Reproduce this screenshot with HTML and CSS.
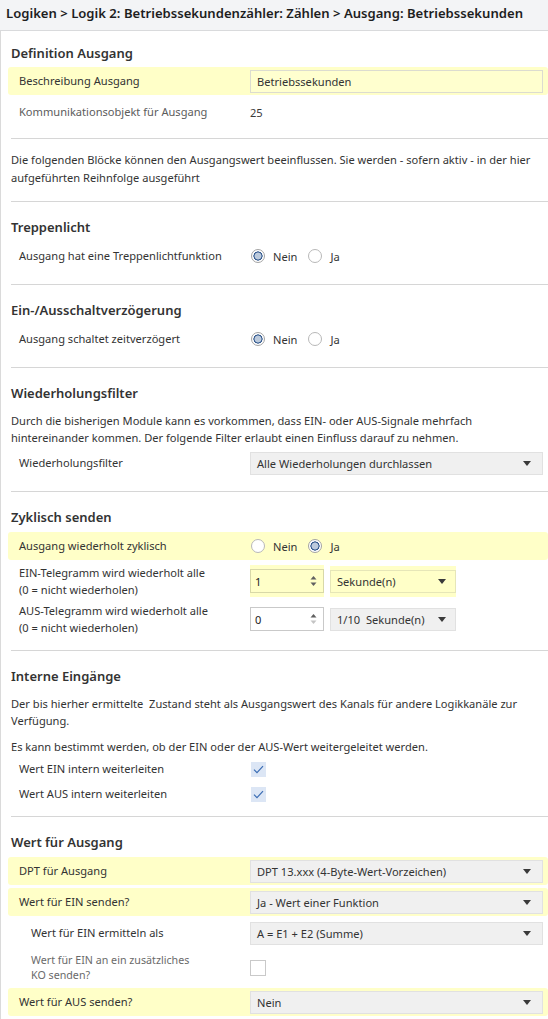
FILE: index.html
```html
<!DOCTYPE html>
<html lang="de">
<head>
<meta charset="utf-8">
<title>Ausgang: Betriebssekunden</title>
<link rel="stylesheet" href="styles.css">
</head>
<body>
<header class="crumb">Logiken &gt; Logik 2: Betriebssekundenzähler: Zählen &gt; Ausgang: Betriebssekunden</header>
<main class="panel">
  <section class="sec sec-first">
    <h2 class="title">Definition Ausgang</h2>
    <div class="row hl">
      <span class="lbl">Beschreibung Ausgang</span>
      <div class="textbox">Betriebssekunden</div>
    </div>
    <div class="row">
      <span class="lbl muted">Kommunikationsobjekt für Ausgang</span>
      <span class="value">25</span>
    </div>
  </section>

  <section class="sec sec-note">
    <p class="para para-wide">Die folgenden Blöcke können den Ausgangswert beeinflussen. Sie werden - sofern aktiv - in der hier<br>aufgeführten Reihnfolge ausgeführt</p>
  </section>

  <section class="sec">
    <h2 class="title">Treppenlicht</h2>
    <div class="row">
      <span class="lbl">Ausgang hat eine Treppenlichtfunktion</span>
      <div class="radios">
        <span class="opt"><span class="radio on"></span>Nein</span>
        <span class="opt"><span class="radio"></span>Ja</span>
      </div>
    </div>
  </section>

  <section class="sec">
    <h2 class="title">Ein-/Ausschaltverzögerung</h2>
    <div class="row">
      <span class="lbl">Ausgang schaltet zeitverzögert</span>
      <div class="radios">
        <span class="opt"><span class="radio on"></span>Nein</span>
        <span class="opt"><span class="radio"></span>Ja</span>
      </div>
    </div>
  </section>

  <section class="sec">
    <h2 class="title">Wiederholungsfilter</h2>
    <p class="para para-block">Durch die bisherigen Module kann es vorkommen, dass EIN- oder AUS-Signale mehrfach<br>hintereinander kommen. Der folgende Filter erlaubt einen Einfluss darauf zu nehmen.</p>
    <div class="row">
      <span class="lbl">Wiederholungsfilter</span>
      <div class="select"><span>Alle Wiederholungen durchlassen</span><svg class="caret" width="8" height="5" viewBox="0 0 8 5"><path d="M0 0H8L4 5Z"/></svg></div>
    </div>
  </section>

  <section class="sec">
    <h2 class="title">Zyklisch senden</h2>
    <div class="row hl">
      <span class="lbl">Ausgang wiederholt zyklisch</span>
      <div class="radios">
        <span class="opt"><span class="radio"></span>Nein</span>
        <span class="opt"><span class="radio on"></span>Ja</span>
      </div>
    </div>
    <div class="row tall">
      <span class="lbl two">EIN-Telegramm wird wiederholt alle<br>(0 = nicht wiederholen)</span>
      <div class="pair">
        <div class="spin spin-hl"><span>1</span><svg class="updown" width="7" height="14" viewBox="0 0 7 14"><path d="M0.5 5.5H6.5L3.5 2Z"/><path d="M0.5 8.5H6.5L3.5 12Z"/></svg></div>
        <div class="select select-sm select-hl"><span>Sekunde(n)</span><svg class="caret" width="8" height="5" viewBox="0 0 8 5"><path d="M0 0H8L4 5Z"/></svg></div>
      </div>
    </div>
    <div class="row tall">
      <span class="lbl two">AUS-Telegramm wird wiederholt alle<br>(0 = nicht wiederholen)</span>
      <div class="pair">
        <div class="spin"><span>0</span><svg class="updown" width="7" height="14" viewBox="0 0 7 14"><path d="M0.5 5.5H6.5L3.5 2Z"/><path class="off" d="M0.5 8.5H6.5L3.5 12Z"/></svg></div>
        <div class="select select-sm"><span class="pre">1/10  Sekunde(n)</span><svg class="caret" width="8" height="5" viewBox="0 0 8 5"><path d="M0 0H8L4 5Z"/></svg></div>
      </div>
    </div>
  </section>

  <section class="sec sec-int">
    <h2 class="title">Interne Eingänge</h2>
    <p class="para para-block">Der bis hierher ermittelte&nbsp; Zustand steht als Ausgangswert des Kanals für andere Logikkanäle zur<br>Verfügung.</p>
    <p class="para para-next">Es kann bestimmt werden, ob der EIN oder der AUS-Wert weitergeleitet werden.</p>
    <div class="row cb">
      <span class="lbl">Wert EIN intern weiterleiten</span>
      <span class="check"><svg width="11" height="9" viewBox="0 0 11 9"><path d="M1 4.6L4 7.6L10 1.2"/></svg></span>
    </div>
    <div class="row cb">
      <span class="lbl">Wert AUS intern weiterleiten</span>
      <span class="check"><svg width="11" height="9" viewBox="0 0 11 9"><path d="M1 4.6L4 7.6L10 1.2"/></svg></span>
    </div>
  </section>

  <section class="sec sec-last">
    <h2 class="title">Wert für Ausgang</h2>
    <div class="row hl">
      <span class="lbl">DPT für Ausgang</span>
      <div class="select"><span>DPT 13.xxx (4-Byte-Wert-Vorzeichen)</span><svg class="caret" width="8" height="5" viewBox="0 0 8 5"><path d="M0 0H8L4 5Z"/></svg></div>
    </div>
    <div class="row hl">
      <span class="lbl">Wert für EIN senden?</span>
      <div class="select"><span>Ja - Wert einer Funktion</span><svg class="caret" width="8" height="5" viewBox="0 0 8 5"><path d="M0 0H8L4 5Z"/></svg></div>
    </div>
    <div class="row indent">
      <span class="lbl">Wert für EIN ermitteln als</span>
      <div class="select"><span>A = E1 + E2 (Summe)</span><svg class="caret" width="8" height="5" viewBox="0 0 8 5"><path d="M0 0H8L4 5Z"/></svg></div>
    </div>
    <div class="row indent tall-sm">
      <span class="lbl small">Wert für EIN an ein zusätzliches<br>KO senden?</span>
      <span class="check empty"></span>
    </div>
    <div class="row hl">
      <span class="lbl">Wert für AUS senden?</span>
      <div class="select"><span>Nein</span><svg class="caret" width="8" height="5" viewBox="0 0 8 5"><path d="M0 0H8L4 5Z"/></svg></div>
    </div>
  </section>
</main>
</body>
</html>
```

FILE: styles.css
```css
* { box-sizing: border-box; }

html, body { margin: 0; padding: 0; }

body {
  width: 548px;
  height: 1019px;
  overflow: hidden;
  background: #ffffff;
  color: #333333;
  font-family: "Noto Sans", "Open Sans", sans-serif;
  font-size: 11.1px;
}

.crumb {
  height: 31px;
  padding-left: 6px;
  background: #f3f4f6;
  border-bottom: 1px solid #d9dadc;
  color: #1e1e1e;
  font-size: 13.1px;
  font-weight: 600;
  line-height: 26px;
  white-space: nowrap;
}

.panel {
  border-left: 1px solid #dadada;
  border-bottom: 1px solid #dadada;
  padding-left: 10px;
}

.sec {
  padding: 15px 0 11px;
  border-bottom: 1px solid #d6d6d6;
}

.sec-first { padding: 12px 0 9px; }
.sec-note { padding: 12px 0 14px; }
.sec-int { padding-bottom: 9px; }
.sec-last { padding-bottom: 0; border-bottom: 0; }

.title {
  margin: 0 0 5px;
  color: #333333;
  font-size: 13px;
  font-weight: 600;
  line-height: 20px;
}

.sec-first .title { margin-bottom: 4px; }

.para {
  margin: 0;
  color: #333333;
  line-height: 17px;
}

.para-wide { line-height: 18px; }
.para-block { margin: 9px 0 3px; }
.para-next { margin: 9px 0 2px; }

.row {
  display: grid;
  grid-template-columns: 231px 1fr;
  align-items: center;
  min-height: 28px;
  margin: 0 0 3px -3px;
  padding: 0 5px 0 11px;
  border-radius: 3px;
}

.hl { background: #ffffc8; }

.row.tall { min-height: 36px; margin-bottom: 2px; }
.row.tall-sm { min-height: 35px; }
.row.cb { min-height: 24px; margin-bottom: 1px; }
.row.indent { padding-left: 23px; grid-template-columns: 219px 1fr; }

.lbl { line-height: 16px; color: #333333; }
.lbl.muted { color: #5c5c5c; }
.lbl.two { line-height: 17px; }
.lbl.small { color: #6a6a6a; font-size: 10.7px; line-height: 15px; }

.value { color: #3a3a3a; }

.textbox {
  height: 23px;
  padding: 0 6px;
  border: 1px solid #dcdcd0;
  background: #ffffcf;
  line-height: 21px;
}

.select {
  display: flex;
  align-items: center;
  justify-content: space-between;
  height: 23px;
  padding: 0 11px 0 6px;
  border: 1px solid #e1e1e1;
  background: #f0f0f0;
  color: #333333;
}

.select-sm { width: 126px; padding-right: 9px; }

.select-hl {
  background: #ffffc8;
  border-color: #e6e6b8;
  box-shadow: 0 -4px 0 0 #ffffc8, 0 4px 0 0 #ffffc8;
}

.pre { white-space: pre; }

.caret path { fill: #3a3a3a; }

.pair {
  display: flex;
  align-items: center;
  gap: 6px;
}

.spin {
  display: flex;
  align-items: center;
  justify-content: space-between;
  width: 74px;
  height: 24px;
  padding: 0 6px 0 4px;
  border: 1px solid #c9c9c9;
  background: #ffffff;
  color: #222222;
}

.spin-hl {
  background: #ffffc8;
  border-color: #d8d8a8;
  box-shadow: 0 -4px 0 0 #ffffc8, 0 4px 0 0 #ffffc8;
}

.updown path { fill: #606060; }
.updown path.off { fill: #c4c4c4; }

.radios {
  display: flex;
  align-items: center;
  padding-left: 1px;
}

.opt {
  display: inline-flex;
  align-items: center;
  gap: 8px;
  margin-right: 11px;
  color: #333333;
}

.radio {
  width: 14px;
  height: 14px;
  border: 1px solid #b8b8b8;
  border-radius: 50%;
  background: #ffffff;
}

.radio.on {
  border-color: #a4a4a4;
  background: radial-gradient(circle at center, #bccadc 0 3.3px, #3a5f92 3.7px 4.4px, #ffffff 4.8px);
}

.check {
  display: flex;
  align-items: center;
  justify-content: center;
  width: 15px;
  height: 15px;
  margin-left: 1px;
  background: #dce6f5;
}

.check path {
  fill: none;
  stroke: #3b6db4;
  stroke-width: 1.2;
}

.check.empty {
  width: 16px;
  height: 16px;
  margin-left: 0;
  border: 1px solid #c9c9c9;
  background: #ffffff;
}
```
